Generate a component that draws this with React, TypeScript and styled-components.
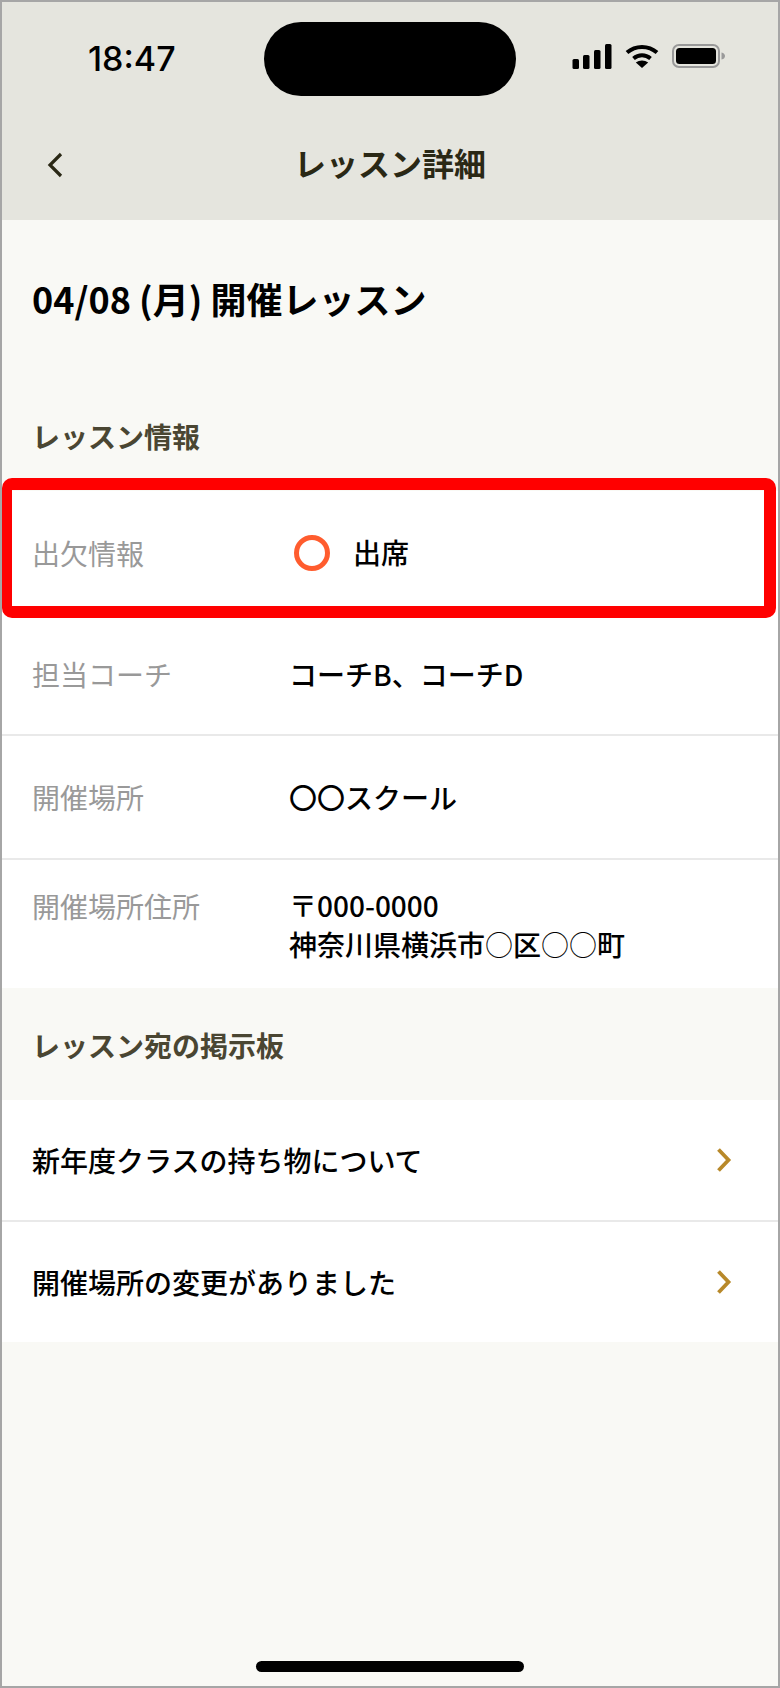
import React from 'react';
import styled, {createGlobalStyle} from 'styled-components';

const GlobalStyle = createGlobalStyle`
    html, body {
        margin: 0;
        padding: 0;
    }
    body {
        font-family: "Noto Sans CJK JP", "Noto Sans", sans-serif;
        background: #fff;
    }
`

type InfoRow = {
    label: string
    lines: string[]
    height: number
}

const infoRows: InfoRow[] = [
    {label: '担当コーチ', lines: ['コーチB、コーチD'], height: 122},
    {label: '開催場所', lines: ['〇〇スクール'], height: 124},
    {label: '開催場所住所', lines: ['〒000-0000', '神奈川県横浜市○区○○町'], height: 128},
]

const notices: string[] = ['新年度クラスの持ち物について', '開催場所の変更がありました']

const StatusIcons = () => (
    <IconGroup>
        <svg width="40" height="26" viewBox="0 0 40 26">
            <rect x="0.5" y="15" width="6.5" height="10" rx="1.5" fill="#000"/>
            <rect x="11" y="11" width="6.5" height="14" rx="1.5" fill="#000"/>
            <rect x="22" y="6" width="6.5" height="19" rx="1.5" fill="#000"/>
            <rect x="33" y="0" width="6.5" height="25" rx="1.5" fill="#000"/>
        </svg>
        <svg width="34" height="24" viewBox="0 0 34 24">
            <path d="M2 8.5C10.5 1 23.5 1 32 8.5" fill="none" stroke="#000" strokeWidth="4"/>
            <path d="M8.5 14.5C13.5 10.2 20.5 10.2 25.5 14.5" fill="none" stroke="#000" strokeWidth="4"/>
            <path d="M17 24L10.8 18.6C14.4 15.8 19.6 15.8 23.2 18.6Z" fill="#000"/>
        </svg>
        <svg width="54" height="24" viewBox="0 0 54 24">
            <rect x="1" y="1" width="46" height="22" rx="6" fill="none" stroke="#999" strokeWidth="2"/>
            <rect x="4" y="4" width="40" height="16" rx="3.5" fill="#000"/>
            <path d="M49.5 8.5C52 9 53 10.5 53 12C53 13.5 52 15 49.5 15.5Z" fill="#999"/>
        </svg>
    </IconGroup>
)

const Chevron = ({color}: {color: string}) => (
    <svg width="16" height="24" viewBox="0 0 16 24">
        <path d="M2.5 1.5L12.5 12L2.5 22.5" fill="none" stroke={color} strokeWidth="3.8"/>
    </svg>
)

// the placeholder circles in the address are drawn thinner than the text round them
const AddressLine = ({text}: {text: string}) => (
    <div>
        {text.split(/(○)/).map((part, i) =>
            part === '○' ? <ThinMark key={i}>{part}</ThinMark> : part
        )}
    </div>
)

export default function App() {
    return (
        <>
            <GlobalStyle/>
            <Frame>
                <Header>
                    <StatusBar>
                        <Time>18:47</Time>
                        <Island/>
                        <StatusIcons/>
                    </StatusBar>
                    <NavBar>
                        <BackButton>
                            <svg width="18" height="26" viewBox="0 0 18 26">
                                <path d="M15 2L4 13L15 24" fill="none" stroke="#2a2815" strokeWidth="3.2"/>
                            </svg>
                        </BackButton>
                        <NavTitle>レッスン詳細</NavTitle>
                    </NavBar>
                </Header>
                <PageTitle>04/08 (月) 開催レッスン</PageTitle>
                <SectionTitle>レッスン情報</SectionTitle>
                <List>
                    <AttendanceRow $height={123} $last>
                        <RowLabel>出欠情報</RowLabel>
                        <AttendanceValue>
                            <AttendanceRing/>
                            <span>出席</span>
                        </AttendanceValue>
                        <Highlight/>
                    </AttendanceRow>
                    {infoRows.map((r, i) =>
                        <Row key={r.label}
                             $height={r.height}
                             $multi={r.lines.length > 1}
                             $last={i === infoRows.length - 1}>
                            <RowLabel>{r.label}</RowLabel>
                            <RowValue>
                                {r.lines.map(l => <AddressLine key={l} text={l}/>)}
                            </RowValue>
                        </Row>
                    )}
                </List>
                <BoardTitle>レッスン宛の掲示板</BoardTitle>
                <List>
                    {notices.map((n, i) =>
                        <NoticeRow key={n} $last={i === notices.length - 1}>
                            <span>{n}</span>
                            <Chevron color="#b8892a"/>
                        </NoticeRow>
                    )}
                </List>
                <Spacer/>
                <HomeBar/>
            </Frame>
        </>
    );
}

const Frame = styled.div`
    box-sizing: border-box;
    width: 780px;
    height: 1688px;
    display: flex;
    flex-direction: column;
    background: #f9f9f5;
    border: 2px solid #a6a6a6;
    overflow: hidden;
    color: #000;
`

const Header = styled.header`
    height: 218px;
    flex-shrink: 0;
    background: #e5e5de;
`

const StatusBar = styled.div`
    height: 118px;
    box-sizing: border-box;
    padding: 20px 52px 0 86px;
    display: flex;
    align-items: flex-start;
    justify-content: space-between;
`

const Time = styled.div`
    width: 90px;
    margin-top: 18px;
    font-family: Inter, "Liberation Sans", sans-serif;
    font-weight: 500;
    font-size: 34px;
    line-height: 38px;
`

const Island = styled.div`
    width: 252px;
    height: 74px;
    margin-left: 30px;
    border-radius: 37px;
    background: #000;
`

const IconGroup = styled.div`
    margin-top: 22px;
    display: flex;
    align-items: flex-start;
    gap: 13px;
`

const NavBar = styled.nav`
    height: 100px;
    position: relative;
    display: flex;
    align-items: center;
    justify-content: center;
`

const BackButton = styled.div`
    position: absolute;
    left: 44px;
    top: 32px;
    display: flex;
`

const NavTitle = styled.h1`
    margin: -16px 0 0;
    font-size: 32px;
    font-weight: 700;
    line-height: 44px;
    color: #2a2815;
`

const PageTitle = styled.h2`
    margin: 0;
    padding: 52px 30px 0;
    font-size: 36px;
    font-weight: 700;
    line-height: 52px;
`

const SectionTitle = styled.h3`
    margin: 0;
    padding: 92px 30px 0;
    height: 167px;
    box-sizing: border-box;
    font-size: 28px;
    font-weight: 700;
    line-height: 40px;
    color: #4a4632;
`

const BoardTitle = styled(SectionTitle)`
    padding-top: 37px;
    height: 112px;
`

const List = styled.div`
    background: #fff;
`

const Row = styled.div<{ $height: number; $multi?: boolean; $last?: boolean }>`
    box-sizing: border-box;
    height: ${p => p.$height}px;
    display: grid;
    grid-template-columns: 257px 1fr;
    align-items: ${p => p.$multi ? 'start' : 'center'};
    padding: ${p => p.$multi ? '26px' : '0'} 30px 0;
    border-bottom: ${p => p.$last ? 'none' : '2px solid #e9e9e9'};
`

const AttendanceRow = styled(Row)`
    position: relative;
`

const RowLabel = styled.div`
    font-size: 28px;
    line-height: 40px;
    color: #999;
`

const RowValue = styled.div`
    font-size: 28px;
    font-weight: 500;
    line-height: 39px;
`

const ThinMark = styled.span`
    font-weight: 300;
`

const AttendanceValue = styled(RowValue)`
    display: flex;
    align-items: center;
    gap: 23px;
    padding-left: 5px;
`

const AttendanceRing = styled.div`
    box-sizing: border-box;
    width: 36px;
    height: 36px;
    border-radius: 50%;
    border: 5px solid #ff5c2e;
`

const Highlight = styled.div`
    position: absolute;
    left: 0;
    right: 2px;
    top: -13px;
    height: 140px;
    box-sizing: border-box;
    border: solid #ff0000;
    border-width: 12px 12px 12px 10px;
    border-radius: 10px;
`

const NoticeRow = styled.div<{ $last?: boolean }>`
    box-sizing: border-box;
    height: ${p => p.$last ? 120 : 122}px;
    padding: 0 46px 0 30px;
    display: flex;
    align-items: center;
    justify-content: space-between;
    font-size: 28px;
    font-weight: 500;
    border-bottom: ${p => p.$last ? 'none' : '2px solid #e9e9e9'};
`

const Spacer = styled.div`
    flex: 1;
`

const HomeBar = styled.div`
    width: 268px;
    height: 11px;
    margin: 0 auto 14px;
    border-radius: 6px;
    background: #000;
`
